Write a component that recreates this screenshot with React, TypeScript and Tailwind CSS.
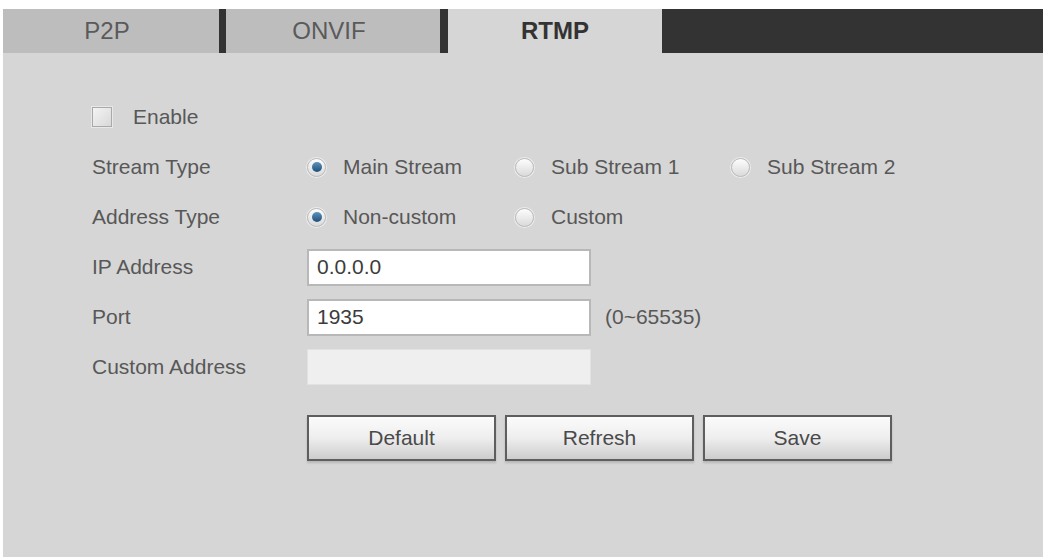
import React from 'react';

const font = { fontFamily: '"Liberation Sans", Arial, sans-serif' };

function Radio({ checked }: { checked?: boolean }) {
  return (
    <span className="w-[19px] h-[19px] rounded-full border border-[#bcbcbc] bg-gradient-to-b from-[#fdfdfd] to-[#dadada] flex items-center justify-center shrink-0 shadow-[0_0_0_1px_#ececec]">
      {checked && (
        <span className="w-[10px] h-[10px] rounded-full bg-gradient-to-b from-[#5f93bd] to-[#1d4f7a]" />
      )}
    </span>
  );
}

function Option({ checked, label, width }: { checked?: boolean; label: string; width?: string }) {
  return (
    <label className={`flex items-center gap-[17px] ${width ?? ''}`}>
      <Radio checked={checked} />
      <span>{label}</span>
    </label>
  );
}

function Row({ label, children }: { label: string; children: React.ReactNode }) {
  return (
    <div className="flex items-center h-[50px]">
      <div className="w-[215px] shrink-0">{label}</div>
      {children}
    </div>
  );
}

function Tab({ label, active, width }: { label: string; active?: boolean; width: string }) {
  return (
    <div
      className={`${width} flex items-center justify-center text-[24px] ${
        active ? 'bg-[#d6d6d6] font-bold text-[#333]' : 'bg-[#bdbdbd] text-[#5a5a5a] pr-[8px]'
      }`}
    >
      {label}
    </div>
  );
}

export default function App() {
  return (
    <div className="min-h-screen bg-white pt-[9px] pl-[3px]" style={font}>
      <div className="w-[1040px] h-[548px] bg-[#d6d6d6]">
        {/* Tabs */}
        <div className="flex h-[44px]">
          <Tab label="P2P" width="w-[216px]" />
          <div className="w-[7px] bg-[#333]" />
          <Tab label="ONVIF" width="w-[214px]" />
          <div className="w-[8px] bg-[#333]" />
          <Tab label="RTMP" width="w-[214px]" active />
          <div className="flex-1 bg-[#333]" />
        </div>

        {/* Form */}
        <div className="pl-[89px] pt-[39px] text-[21px] text-[#585858]">
          <div className="flex items-center h-[50px]">
            <span className="w-[20px] h-[20px] border border-[#a9a9a9] bg-gradient-to-br from-[#f4f4f4] to-[#d9d9d9] shadow-[0_0_0_1px_#e8e8e8]" />
            <span className="ml-[21px]">Enable</span>
          </div>

          <Row label="Stream Type">
            <Option checked label="Main Stream" width="w-[208px]" />
            <Option label="Sub Stream 1" width="w-[216px]" />
            <Option label="Sub Stream 2" />
          </Row>

          <Row label="Address Type">
            <Option checked label="Non-custom" width="w-[208px]" />
            <Option label="Custom" />
          </Row>

          <Row label="IP Address">
            <div className="w-[284px] h-[37px] bg-white border-2 border-[#b8b8b8] flex items-center pl-[8px] text-[#3c3c3c]">
              0.0.0.0
            </div>
          </Row>

          <Row label="Port">
            <div className="w-[284px] h-[37px] bg-white border-2 border-[#b8b8b8] flex items-center pl-[8px] text-[#3c3c3c]">
              1935
            </div>
            <span className="ml-[14px]">(0~65535)</span>
          </Row>

          <Row label="Custom Address">
            <div className="w-[284px] h-[36px] bg-[#efefef] border border-[#e2e2e2]" />
          </Row>

          <div className="flex gap-[9px] ml-[215px] mt-[23px]">
            {['Default', 'Refresh', 'Save'].map((b) => (
              <button
                key={b}
                className="w-[189px] h-[46px] border-2 border-[#5e5e5e] bg-gradient-to-b from-[#fbfbfb] via-[#eeeeee] to-[#cdcdcd] text-[#4a4a4a] text-[21px] shadow-[0_2px_2px_rgba(0,0,0,0.15)]"
              >
                {b}
              </button>
            ))}
          </div>
        </div>
      </div>
    </div>
  );
}
